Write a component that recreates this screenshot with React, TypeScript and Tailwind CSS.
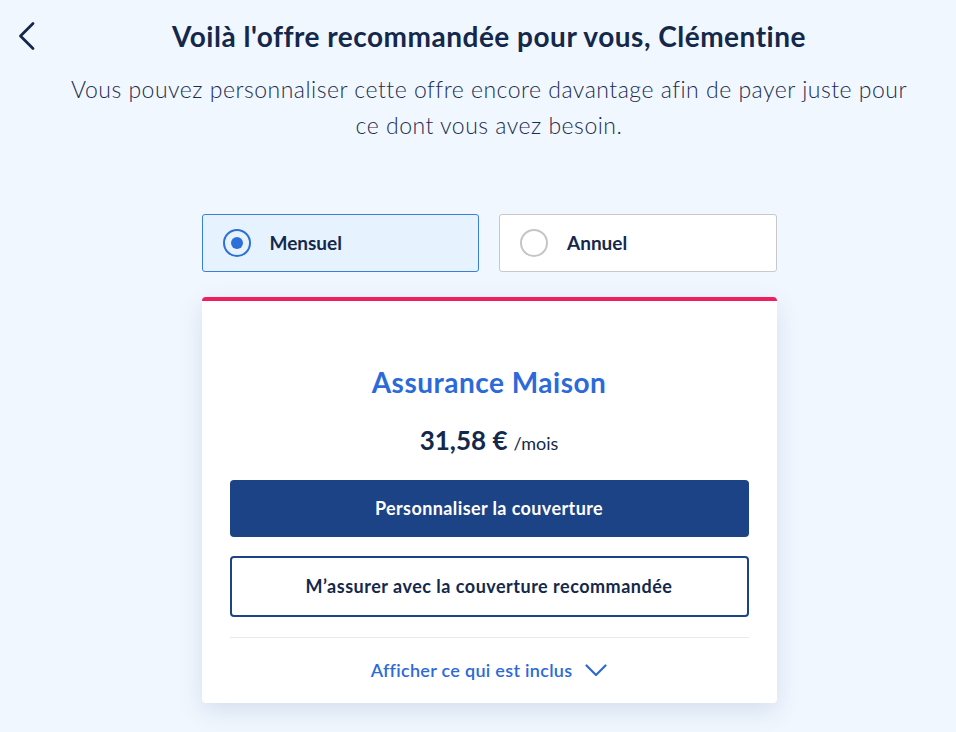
export default function App() {
  return (
    <div
      className="min-h-[732px] bg-[#f1f7fe] text-[#14284b]"
      style={{ fontFamily: "Lato, 'Open Sans', sans-serif" }}
    >
      <div className="relative pl-[22px]">
        <button className="absolute left-[16px] top-[20px] text-[#14284b]">
          <svg width="24" height="32" viewBox="0 0 24 32" fill="none">
            <path d="M17 3.5 4.5 16 17 28.5" stroke="currentColor" strokeWidth="2.8" strokeLinecap="round" strokeLinejoin="round" />
          </svg>
        </button>
        <div className="pt-[18px] text-center">
          <h1 className="text-[28px] font-bold leading-[36px] tracking-[0.5px] text-[#14284b]">
            Voilà l'offre recommandée pour vous, Clémentine
          </h1>
          <p className="mx-auto mt-[17px] w-[860px] text-[23px] font-light leading-[36px] tracking-[0.5px] text-[#1c2d50]">
            Vous pouvez personnaliser cette offre encore davantage afin de payer juste pour ce dont vous avez besoin.
          </p>
        </div>

        <div className="mx-auto mt-[71px] w-[575px]">
          <div className="grid grid-cols-2 gap-[20px]">
            <label className="flex h-[58px] items-center gap-[19px] rounded-[3px] border border-[#3b7fdc] bg-[#e6f3fe] pl-[20px]">
              <span className="flex h-[28px] w-[28px] items-center justify-center rounded-full border-2 border-[#2d6fd8]">
                <span className="h-[12px] w-[12px] rounded-full bg-[#2d6fd8]" />
              </span>
              <span className="text-[19px] font-bold text-[#14284b]">Mensuel</span>
            </label>
            <label className="flex h-[58px] items-center gap-[19px] rounded-[3px] border border-[#c8c8cc] bg-white pl-[20px]">
              <span className="h-[28px] w-[28px] rounded-full border-2 border-[#c6c4c9]" />
              <span className="text-[19px] font-bold text-[#14284b]">Annuel</span>
            </label>
          </div>

          <div className="mt-[25px] overflow-hidden rounded-[4px] border-t-4 border-[#ee1e5f] bg-white px-[28px] shadow-[0_8px_24px_rgba(40,80,150,0.14)]">
            <h2 className="pt-[63px] text-center text-[28px] font-bold leading-[36px] tracking-[0.5px] text-[#2b6ad8]">
              Assurance Maison
            </h2>
            <div className="mt-[21px] flex items-baseline justify-center gap-[6px]">
              <span className="text-[26px] font-bold text-[#14284b]">31,58 €</span>
              <span className="text-[18px] text-[#14284b]">/mois</span>
            </div>
            <button className="mt-[20px] flex h-[57px] w-full items-center justify-center rounded-[4px] bg-[#1c4386] text-[18px] font-bold tracking-[0.4px] text-white">
              Personnaliser la couverture
            </button>
            <button className="mt-[19px] flex h-[61px] w-full items-center justify-center rounded-[4px] border-2 border-[#1c4386] bg-white text-[18px] font-bold tracking-[0.5px] text-[#14284b]">
              M’assurer avec la couverture recommandée
            </button>
            <div className="mt-[20px] border-t border-[#e6ebf2]" />
            <button className="mx-auto flex h-[65px] items-center gap-[13px] text-[18px] font-semibold tracking-[0.3px] text-[#2b6ad8]">
              Afficher ce qui est inclus
              <svg width="22" height="13" viewBox="0 0 22 13" fill="none">
                <path d="M1.5 1.5 11 11 20.5 1.5" stroke="currentColor" strokeWidth="2.2" strokeLinecap="round" strokeLinejoin="round" />
              </svg>
            </button>
          </div>
        </div>
      </div>
    </div>
  );
}
